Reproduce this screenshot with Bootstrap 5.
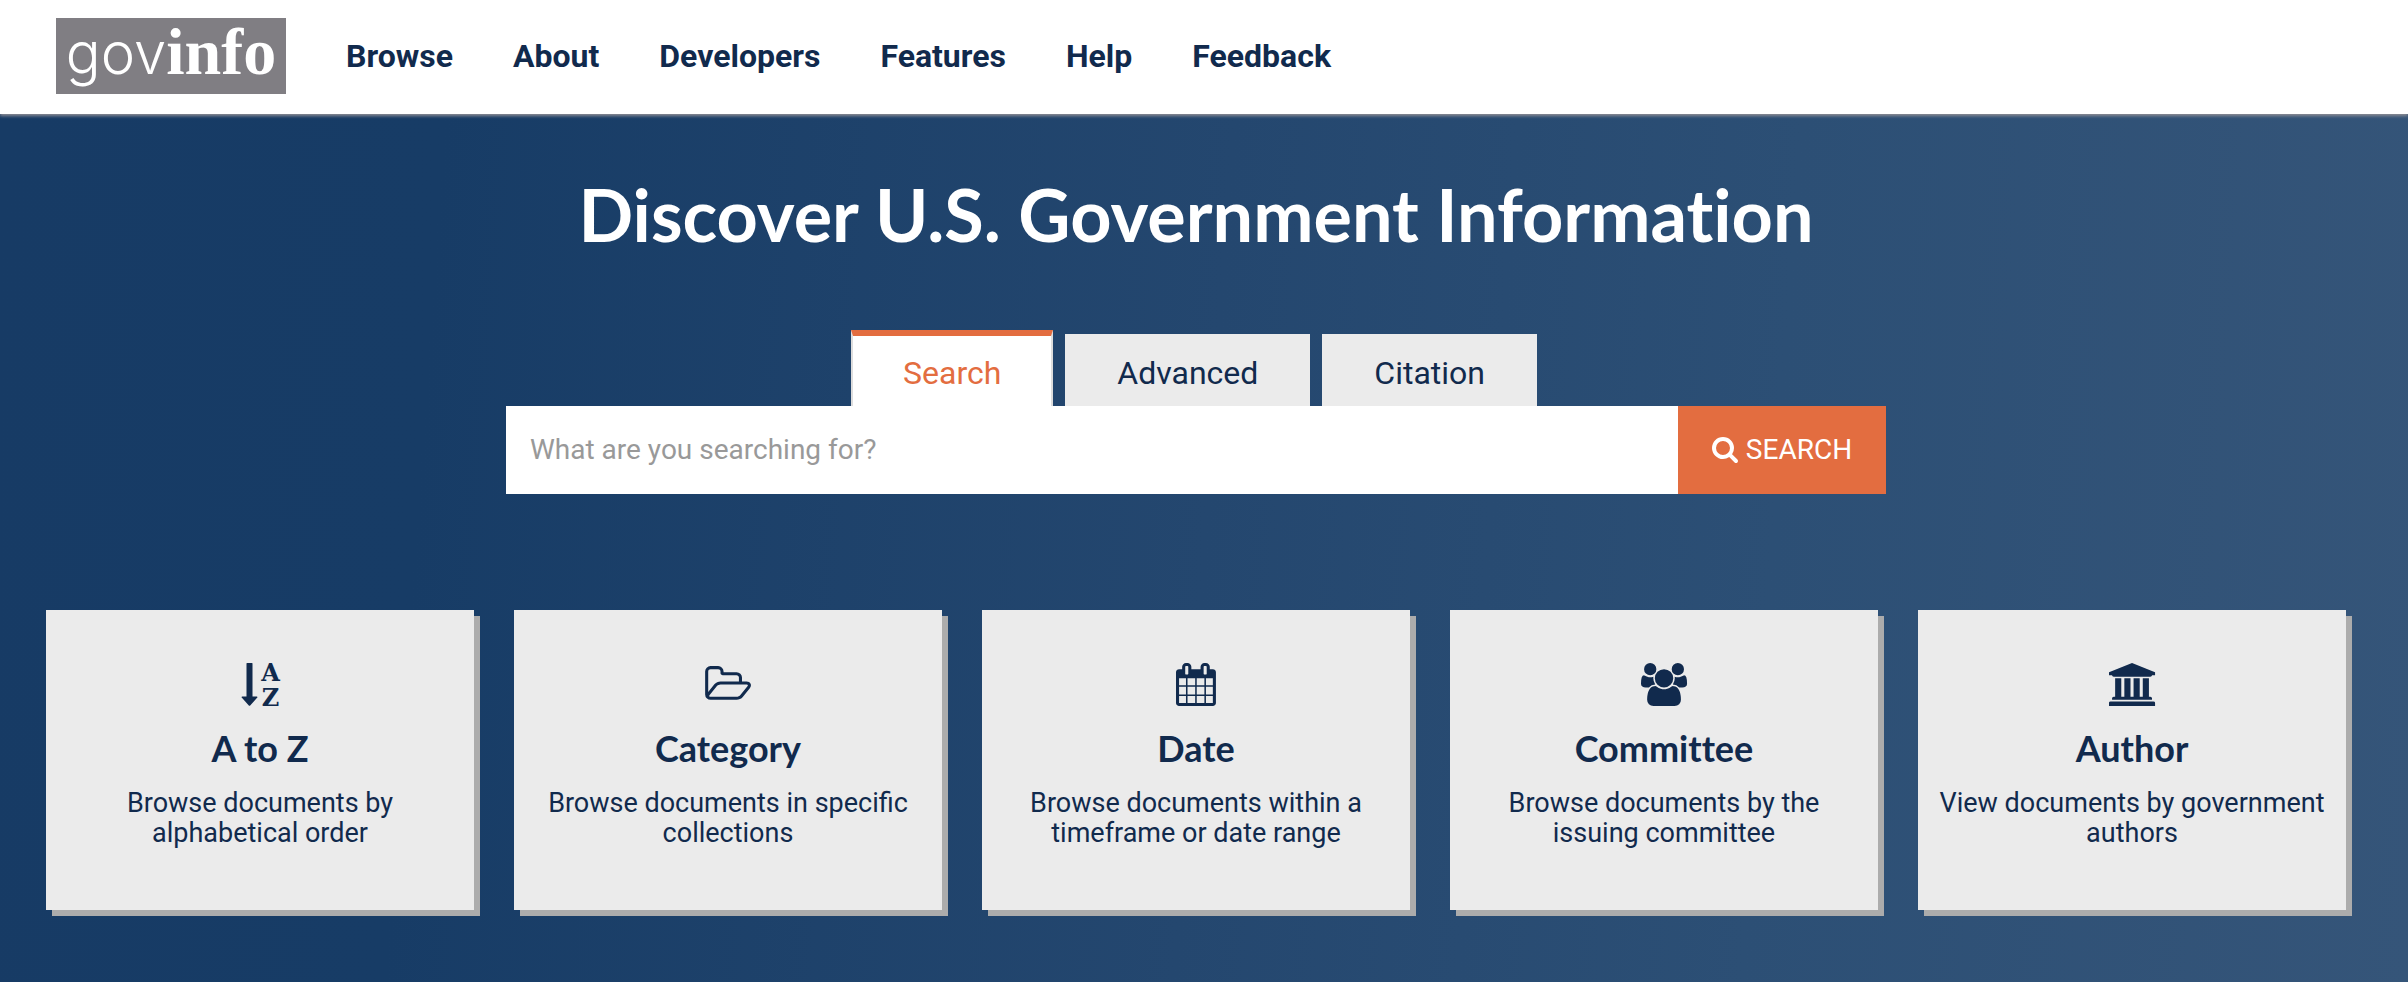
<!DOCTYPE html>
<html lang="en">
<head>
<meta charset="utf-8">
<meta name="viewport" content="width=device-width, initial-scale=1">
<title>GovInfo</title>
<link href="https://cdn.jsdelivr.net/npm/bootstrap@5.3.0/dist/css/bootstrap.min.css" rel="stylesheet">
<style>
  :root { --navy: #112a4d; --orange: #e36d40; --panel: #ebebeb; }
  body { font-family: Roboto, "Liberation Sans", sans-serif; color: var(--navy); }
  .site-header { padding: 18px 56px 20px; box-shadow: 0 2px 3px #8c8c94; z-index: 1; }
  .brand { width: 230px; height: 76px; background: #807e83; line-height: 68px; }
  .brand-gov { font-family: Inter, sans-serif; font-weight: 300; font-size: 58px; }
  .brand-info { font-family: "Liberation Serif", serif; font-weight: 700; font-size: 66px; }
  .main-nav { gap: 60px; margin-left: 60px; }
  .main-nav .nav-link { font-size: 32px; line-height: 40px; font-weight: 700; color: var(--navy); }
  .hero { padding: 60px 62px 66px 46px; background: linear-gradient(94deg, #173b65 0%, #173c66 18%, #24476f 50%, #2c4f75 73%, #355579 100%); }
  .hero-title { font: 700 72px/80px Lato, sans-serif; font-variant-ligatures: none; margin-bottom: 76px; }
  .search-area { max-width: 1380px; }
  .search-tabs { gap: 12px; margin-right: 4px; }
  .search-tabs .nav-link { font-size: 32px; line-height: 36px; padding: 21px 52px 15px; color: var(--navy); background: var(--panel); border: 0; border-radius: 0; }
  .search-tabs .nav-link.active { padding: 19px 50px 15px; color: var(--orange); background: #fff; border: solid #ddd; border-width: 6px 2px 0; border-top-color: var(--orange); }
  .search-box { height: 88px; font-size: 28px; }
  .search-box .form-control { font-size: 28px; padding: 0 24px; }
  .search-box .form-control::placeholder { color: #999; }
  .search-box .btn { width: 208px; font-size: 28px; color: #fff; background: var(--orange); gap: 8px; }
  .browse-row { --bs-gutter-x: 40px; --bs-gutter-y: 40px; margin-top: 76px; }
  .browse-card { padding: 53px 20px 62px; color: var(--navy); background: var(--panel); box-shadow: 6px 6px 0 #acacac; }
  .browse-card svg { height: 43px; overflow: visible; }
  .browse-card h2 { font: 700 36px/40px Lato, sans-serif; font-variant-ligatures: none; margin: 22px 0 20px; }
  .browse-card p { font-size: 27px; line-height: 30px; }
</style>
</head>
<body class="d-flex flex-column min-vh-100">
<header class="site-header bg-white d-flex flex-wrap align-items-center position-relative">
  <a href="#" class="brand d-flex justify-content-center align-items-baseline text-white text-decoration-none"><span class="brand-gov">gov</span><span class="brand-info">info</span></a>
  <nav class="main-nav nav" aria-label="Main">
    <a class="nav-link p-0" href="#">Browse</a>
    <a class="nav-link p-0" href="#">About</a>
    <a class="nav-link p-0" href="#">Developers</a>
    <a class="nav-link p-0" href="#">Features</a>
    <a class="nav-link p-0" href="#">Help</a>
    <a class="nav-link p-0" href="#">Feedback</a>
  </nav>
</header>
<main class="hero flex-grow-1">
  <h1 class="hero-title text-white text-center">Discover U.S. Government Information</h1>
  <section class="search-area mx-auto">
    <div class="search-tabs nav justify-content-center align-items-end" role="tablist">
      <button type="button" class="nav-link active" role="tab" aria-selected="true">Search</button>
      <button type="button" class="nav-link" role="tab" aria-selected="false">Advanced</button>
      <button type="button" class="nav-link" role="tab" aria-selected="false">Citation</button>
    </div>
    <form class="search-box d-flex" role="search">
      <input type="text" class="form-control border-0 rounded-0" aria-label="Search" placeholder="What are you searching for?">
      <button type="submit" class="btn rounded-0 border-0 p-0 flex-shrink-0 d-flex align-items-center justify-content-center">
        <svg width="26" height="26" viewBox="64 128 1664 1664" fill="currentColor" aria-hidden="true"><path d="M1216 832q0-185-131.5-316.5T768 384 451.5 515.5 320 832t131.5 316.5T768 1280t316.5-131.5T1216 832zm512 832q0 52-38 90t-90 38q-54 0-90-38l-343-342q-179 124-399 124-143 0-273.5-55.5t-225-150-150-225T64 832t55.5-273.5 150-225 225-150T768 128t273.5 55.5 225 150 150 225T1472 832q0 220-124 399l343 343q37 37 37 90z"/></svg>
        <span>SEARCH</span>
      </button>
    </form>
  </section>
  <section class="browse-row row row-cols-1 row-cols-md-3 row-cols-xl-5">
    <div class="col">
      <a href="#" class="browse-card d-block h-100 text-center text-decoration-none">
        <svg viewBox="0 0 46 43" fill="currentColor" aria-hidden="true"><path d="M10 0h5q.5 0 .5.5v33h4.300q1.200 0 .5 1l-7.100 8q-.7.700-1.400 0l-7.100-8q-.7-1 .5-1h4.300V.500q0-.5.5-.5z"/><g font-family="DejaVu Serif, serif" font-weight="700" font-size="24" text-anchor="middle"><text x="33.500" y="18">A</text><text x="33.500" y="43">Z</text></g></svg>
        <h2>A to Z</h2>
        <p class="mb-0">Browse documents by alphabetical order</p>
      </a>
    </div>
    <div class="col">
      <a href="#" class="browse-card d-block h-100 text-center text-decoration-none">
        <svg viewBox="58 0 1920 1792" fill="currentColor" aria-hidden="true"><path d="M1845 931q0-35-53-35H704q-40 0-85.500 21.500T547 970l-294 363q-18 24-18 40 0 35 53 35h1088q40 0 86-22t71-53l294-363q18-22 18-39zM704 768h768V608q0-40-28-68t-68-28H800q-40 0-68-28t-28-68v-64q0-40-28-68t-68-28H288q-40 0-68 28t-28 68v853l256-315q44-53 116-87.500T704 768zm1269 163q0 62-46 120l-295 363q-43 53-116 87.500t-140 34.500H288q-92 0-158-66t-66-158V352q0-92 66-158t158-66h320q92 0 158 66t66 158v32h544q92 0 158 66t66 158v160h192q54 0 99 24.500t67 70.500q15 32 15 68z"/></svg>
        <h2>Category</h2>
        <p class="mb-0">Browse documents in specific collections</p>
      </a>
    </div>
    <div class="col">
      <a href="#" class="browse-card d-block h-100 text-center text-decoration-none">
        <svg viewBox="64 0 1664 1792" fill="currentColor" aria-hidden="true"><path d="M192 1664h288v-288H192v288zm352 0h320v-288H544v288zM192 1312h288V992H192v320zm352 0h320V992H544v320zM192 928h288V640H192v288zm736 736h320v-288H928v288zM544 928h320V640H544v288zm768 736h288v-288h-288v288zM928 1312h320V992H928v320zM576 448V160q0-13-9.500-22.500T544 128h-64q-13 0-22.500 9.500T448 160v288q0 13 9.500 22.500T480 480h64q13 0 22.500-9.500T576 448zm736 864h288V992h-288v320zM928 928h320V640H928v288zm384 0h288V640h-288v288zm32-480V160q0-13-9.500-22.500T1312 128h-64q-13 0-22.500 9.500T1216 160v288q0 13 9.500 22.500t22.500 9.500h64q13 0 22.500-9.500t9.500-22.500zm384-64v1280q0 52-38 90t-90 38H192q-52 0-90-38t-38-90V384q0-52 38-90t90-38h128v-96q0-66 47-113T480 0h64q66 0 113 47t47 113v96h384v-96q0-66 47-113t113-47h64q66 0 113 47t47 113v96h128q52 0 90 38t38 90z"/></svg>
        <h2>Date</h2>
        <p class="mb-0">Browse documents within a timeframe or date range</p>
      </a>
    </div>
    <div class="col">
      <a href="#" class="browse-card d-block h-100 text-center text-decoration-none">
        <svg viewBox="-64 0 1920 1792" fill="currentColor" aria-hidden="true"><path d="M529 896q-162 5-265 128H130q-82 0-138-40.500T-64 865q0-353 124-353 6 0 43.500 21t97.500 42.500T320 597q67 0 133-23-5 37-5 66 0 139 81 256zm1071 637q0 120-73 189.500T1333 1792H459q-121 0-194-69.500T192 1533q0-53 3.500-103.500t14-109T236 1212t43-97.500 62-81 85.500-53.500T538 960q10 0 43 21.500t73 48 107 48 135 21.500 135-21.500 107-48 73-48 43-21.500q61 0 111.500 20t85.500 53.500 62 81 43 97.500 26.500 108.500 14 109 3.500 103.500zM576 256q0 106-75 181t-181 75-181-75-75-181 75-181T320 0t181 75 75 181zm704 384q0 159-112.500 271.500T896 1024 624.500 911.500 512 640t112.500-271.500T896 256t271.500 112.500T1280 640zm576 225q0 78-56 118.500t-138 40.500h-134q-103-123-265-128 81-117 81-256 0-29-5-66 66 23 133 23 59 0 119-21.500t97.500-42.500 43.500-21q124 0 124 353zm-128-609q0 106-75 181t-181 75-181-75-75-181 75-181 181-75 181 75 75 181z"/></svg>
        <h2>Committee</h2>
        <p class="mb-0">Browse documents by the issuing committee</p>
      </a>
    </div>
    <div class="col">
      <a href="#" class="browse-card d-block h-100 text-center text-decoration-none">
        <svg viewBox="0 0 1920 1792" fill="currentColor" aria-hidden="true"><path d="M960 0l960 384v128h-128q0 26-20.500 45t-48.500 19H197q-28 0-48.500-19T128 512H0V384zM256 640h256v768h128V640h256v768h128V640h256v768h128V640h256v768h59q28 0 48.500 19t20.500 45v64H128v-64q0-26 20.500-45t48.500-19h59V640zm1595 960q28 0 48.500 19t20.500 45v128H0v-128q0-26 20.500-45t48.500-19h1782z"/></svg>
        <h2>Author</h2>
        <p class="mb-0">View documents by government authors</p>
      </a>
    </div>
  </section>
</main>
<script src="https://cdn.jsdelivr.net/npm/bootstrap@5.3.0/dist/js/bootstrap.bundle.min.js"></script>
</body>
</html>
